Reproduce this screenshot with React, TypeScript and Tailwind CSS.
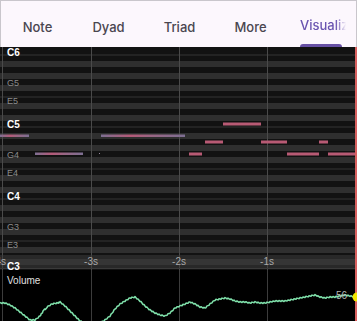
import React from "react";

const TABS = ["Note", "Dyad", "Triad", "More"];

const ROW_H = 6;
const ROW_TOP = 2; // first row (C6) offset inside the roll
const ROLL_H = 223;

// k = semitones below C6
function isBlack(k: number) {
  const pc = (12 - (k % 12)) % 12; // pitch class, 0 = C
  return [1, 3, 6, 8, 10].includes(pc);
}
function hasLineBelow(k: number) {
  const pc = (12 - (k % 12)) % 12;
  return pc === 0 || pc === 5; // C over B, F over E
}

const LABELS: { k: number; t: string; main: boolean }[] = [
  { k: 0, t: "C6", main: true },
  { k: 5, t: "G5", main: false },
  { k: 8, t: "E5", main: false },
  { k: 12, t: "C5", main: true },
  { k: 17, t: "G4", main: false },
  { k: 20, t: "E4", main: false },
  { k: 24, t: "C4", main: true },
  { k: 29, t: "G3", main: false },
  { k: 32, t: "E3", main: false },
];

// [x1, x2, k, style]
const NOTES: [number, number, number, "soft" | "solid"][] = [
  [0, 29, 14, "soft"],
  [101, 185, 14, "soft"],
  [35, 83, 17, "soft"],
  [223, 261, 12, "solid"],
  [205, 223, 15, "solid"],
  [261, 287, 15, "solid"],
  [319, 328, 15, "solid"],
  [189, 202, 17, "solid"],
  [287, 319, 17, "solid"],
  [328, 357, 17, "solid"],
];

const GRID = [2, 91, 179, 267];

const VOL: [number, number][] = [
  [0, 303], [5, 303], [10, 305], [15, 308], [20, 312], [25, 316], [30, 320], [35, 320],
  [40, 316], [43, 311], [47, 307], [52, 304], [57, 303], [60, 302], [65, 306], [70, 311],
  [75, 316], [80, 321], [85, 323], [100, 323], [105, 320], [110, 316], [115, 309], [120, 304],
  [125, 301], [130, 298], [135, 297], [140, 301], [145, 306], [150, 310], [155, 313], [160, 315],
  [165, 316], [170, 313], [175, 308], [180, 306], [185, 304], [190, 302], [195, 304], [200, 307],
  [205, 308], [210, 304], [215, 300], [220, 299], [225, 298], [230, 299], [235, 301], [240, 302],
  [245, 302], [250, 303], [255, 302], [260, 303], [265, 303], [270, 302], [275, 301], [280, 301],
  [285, 301], [290, 300], [295, 299], [300, 298], [305, 297], [310, 296], [315, 295], [320, 297],
  [325, 298], [330, 297], [335, 297], [340, 296], [345, 295], [350, 296], [355, 297],
];

const VOL_TOP = 270;

function volumePath() {
  const pts: string[] = [];
  for (let i = 0; i < VOL.length - 1; i++) {
    const [x1, y1] = VOL[i];
    const [x2, y2] = VOL[i + 1];
    for (let s = 0; s < 5; s++) {
      const x = x1 + ((x2 - x1) * s) / 5;
      const y = y1 + ((y2 - y1) * s) / 5 + (((x * 7) % 3) - 1) * 0.5;
      pts.push(`${x.toFixed(1)},${(y - VOL_TOP).toFixed(1)}`);
    }
  }
  const [lx, ly] = VOL[VOL.length - 1];
  pts.push(`${lx},${ly - VOL_TOP}`);
  return "M" + pts.join("L");
}

const FONT = "Liberation Sans, Arial, sans-serif";

function PianoRoll() {
  const rows = [];
  for (let k = 0; k <= 37; k++) {
    const y = ROW_TOP + k * ROW_H;
    rows.push(
      <rect key={"r" + k} x={0} y={y} width={357} height={ROW_H} fill={isBlack(k) ? "#2f2f2f" : "#121212"} />
    );
    if (k > 0 && hasLineBelow(k - 1)) {
      rows.push(<rect key={"l" + k} x={0} y={y - 0.5} width={357} height={1} fill="#353535" />);
    }
  }
  return (
    <svg width={357} height={ROLL_H} className="block shrink-0">
      <rect x={0} y={0} width={357} height={ROLL_H} fill="#121212" />
      {rows}
      {GRID.map((x) => (
        <rect key={x} x={x} y={0} width={1} height={ROLL_H} fill="#4a4a4a" />
      ))}
      <defs>
        <linearGradient id="soft" x1="0" x2="1" y1="0" y2="0">
          <stop offset="0" stopColor="#7d6f92" />
          <stop offset="0.35" stopColor="#b45a78" />
          <stop offset="0.6" stopColor="#9a6684" />
          <stop offset="1" stopColor="#7d6f92" />
        </linearGradient>
      </defs>
      {NOTES.map(([x1, x2, k, st], i) => {
        const cy = ROW_TOP + k * ROW_H + 3;
        return st === "soft" ? (
          <rect key={i} x={x1} y={cy - 1.5} width={x2 - x1} height={2.5} fill="url(#soft)" />
        ) : (
          <rect key={i} x={x1} y={cy - 1.5} width={x2 - x1} height={3} fill="#b85a74" />
        );
      })}
      <rect x={99} y={ROW_TOP + 17 * ROW_H + 2} width={1} height={1} fill="#9a8aa0" />
      {/* time axis */}
      <rect x={0} y={208} width={357} height={13} fill="#3a3a3a" opacity={0.55} />
      <rect x={0} y={221} width={357} height={1} fill="#3a3a3a" />
      <text x={6} y={218} textAnchor="end" fontSize={10} fill="#a8a8a8" fontFamily={FONT}>
        -4s
      </text>
      {[
        [91, "-3s"],
        [179, "-2s"],
        [267, "-1s"],
      ].map(([x, t]) => (
        <text key={t as string} x={x as number} y={218} textAnchor="middle" fontSize={10} fill="#a8a8a8" fontFamily={FONT}>
          {t}
        </text>
      ))}
      {LABELS.map((l) => (
        <text
          key={l.t}
          x={7}
          y={ROW_TOP + l.k * ROW_H + 7}
          fontSize={l.main ? 10 : 9}
          fontWeight={l.main ? 700 : 400}
          fill={l.main ? "#ffffff" : "#8c8c8c"}
          fontFamily={FONT}
        >
          {l.t}
        </text>
      ))}
      <text x={7} y={222.5} fontSize={10} fontWeight={700} fill="#ffffff" fontFamily={FONT}>
        C3
      </text>
      <rect x={355} y={0} width={2} height={ROLL_H} fill="#d8605f" />
    </svg>
  );
}

function VolumePanel() {
  return (
    <div className="relative flex-1 bg-black">
      <svg width={357} height={51} className="block">
        {GRID.map((x) => (
          <rect key={x} x={x} y={0} width={1} height={51} fill="#3c3c3c" />
        ))}
        <path d={volumePath()} fill="none" stroke="#7fe0aa" strokeWidth={1.5} strokeLinejoin="round" />
        <text x={336} y={29} fontSize={10} fill="#b8b8b8" fontFamily={FONT}>
          56
        </text>
        <rect x={355} y={0} width={2} height={51} fill="#d8605f" />
        <circle cx={357} cy={27} r={4.5} fill="#f3e600" />
      </svg>
      <span className="absolute left-[7px] top-[6px] text-[10px] leading-none text-[#e0e0e0] font-['Liberation_Sans',Arial,sans-serif]">
        Volume
      </span>
    </div>
  );
}

export default function App() {
  return (
    <div className="w-[357px] h-[321px] overflow-hidden bg-black flex flex-col">
      <div className="h-[47px] shrink-0 bg-[#fcf7fd] border-t border-x border-[#c9c6cc] flex items-end font-['Inter',sans-serif]">
        <div className="flex h-full items-center pl-[1px]">
          {TABS.map((t) => (
            <div key={t} className="w-[71px] text-center text-[13px] font-medium text-[#4a4650] pt-[7px]">
              {t}
            </div>
          ))}
        </div>
        <div className="ml-[14px] h-full flex flex-col justify-end">
          <div className="w-[46px] overflow-hidden flex-1 flex items-center pt-[7px] [mask-image:linear-gradient(to_right,black_78%,transparent)]">
            <span className="text-[13px] font-medium text-[#6a54b0] whitespace-nowrap">Visualization</span>
          </div>
          <div className="w-[42px] h-[3px] rounded-t-[3px] bg-[#6750a4]" />
        </div>
      </div>
      <PianoRoll />
      <VolumePanel />
    </div>
  );
}
